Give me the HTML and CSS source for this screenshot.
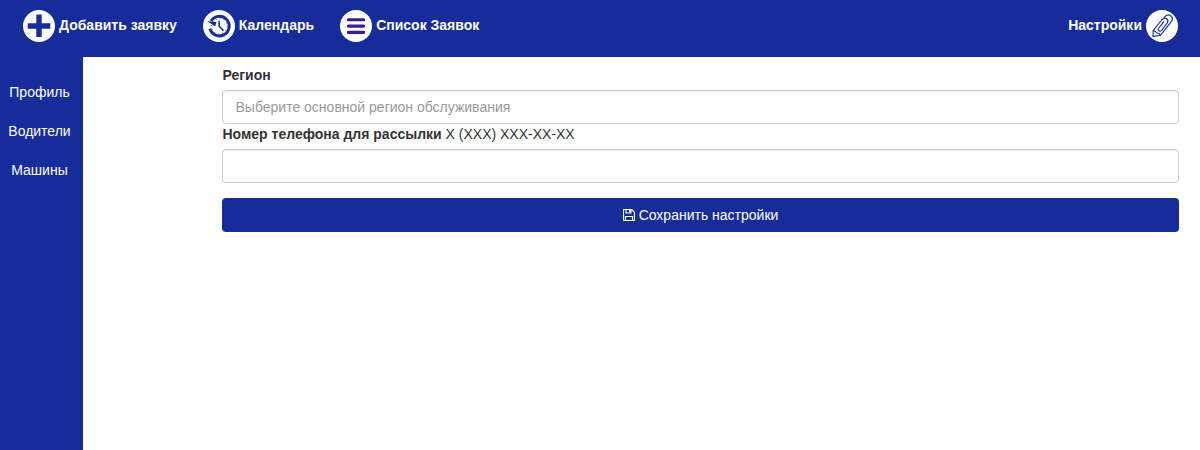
FILE: index.html
```html
<!DOCTYPE html>
<html lang="ru">
<head>
<meta charset="utf-8">
<title>Настройки</title>
<link rel="stylesheet" href="styles.css">
</head>
<body>
<header class="topbar">
  <nav class="menu">
    <a class="menu-item">
      <svg class="icon" viewBox="0 0 32 32"><circle cx="16" cy="16" r="16" fill="#fff"/><path d="M13.3 4.5h5.4v8.8h8.6v5.4h-8.6V27h-5.4v-8.3H4.7v-5.4h8.6z" fill="#152c9a"/></svg>
      <span>Добавить заявку</span>
    </a>
    <a class="menu-item">
      <svg class="icon" viewBox="0 0 32 32"><circle cx="16" cy="16" r="16" fill="#fff"/><path d="M8 11A9.8 9.8 0 1 1 6.9 18.6" fill="none" stroke="#152c9a" stroke-width="2.9"/><path d="M4.2 11.2L13.4 12l-1.2 4.6z" fill="#152c9a"/><circle cx="16.3" cy="16.2" r="7.9" fill="none" stroke="#152c9a" stroke-width="1.4" stroke-dasharray="1 3.14" opacity=".6"/><path d="M16.2 10.8v5.6l4.4 4.4" fill="none" stroke="#152c9a" stroke-width="1.5"/></svg>
      <span>Календарь</span>
    </a>
    <a class="menu-item">
      <svg class="icon" viewBox="0 0 32 32"><circle cx="16" cy="16" r="16" fill="#fff"/><path d="M8.3 9.8h15.4M8.3 16.1h15.4M8.3 22.4h15.4" stroke="#3c1d91" stroke-width="3.1" stroke-linecap="round"/></svg>
      <span>Список Заявок</span>
    </a>
  </nav>
  <a class="menu-item">
    <span>Настройки</span>
    <svg class="icon" viewBox="0 0 32 32"><circle cx="16" cy="16" r="16" fill="#fff"/><g fill="none" stroke="#203799" stroke-width="1.2" stroke-linecap="round" stroke-linejoin="round"><path d="M17.6 8.6 18.8 6.9Q21.5 3.6 24.6 5.5Q27.8 8 25.5 11.4L14.6 25.2L7 26.6 7.2 20.6 15.6 10Q18.2 7 20.8 8.8Q22.9 10.8 21.2 13.2L15.6 20.4Q14.2 21.8 12.9 20.8Q11.6 19.6 12.8 18L17.6 11.8"/><path d="M7.4 20.8Q10 21 10.8 23Q13.4 22.8 14.4 25"/></g></svg>
  </a>
</header>
<div class="page">
  <aside class="sidebar">
    <a>Профиль</a>
    <a>Водители</a>
    <a>Машины</a>
  </aside>
  <form class="settings">
    <label class="label" for="region">Регион</label>
    <input class="field" id="region" type="text" placeholder="Выберите основной регион обслуживания">
    <div class="label"><label for="phone">Номер телефона для рассылки</label> <span class="hint">X (XXX) XXX-XX-XX</span></div>
    <input class="field" id="phone" type="text">
    <button class="save" type="button"><svg class="floppy" viewBox="0 0 12 12"><path d="M.5 .5H8.6L11.5 3.4V11.5H.5zM3 .5V4h5V.5M2.5 11.5V7.5h7v4" fill="none" stroke="#fff" stroke-width="1.15"/><path d="M6 .5h1.6v2.7H6z" fill="#fff"/></svg><span>Сохранить настройки</span></button>
  </form>
</div>
</body>
</html>
```
FILE: styles.css
```css
* {
  box-sizing: border-box;
}

body {
  margin: 0;
  height: 450px;
  display: flex;
  flex-direction: column;
  background: #fff;
  color: #333;
  font: 14px/20px "Liberation Sans", Arial, sans-serif;
}

.topbar {
  height: 57px;
  padding: 10px 22px 0 23px;
  display: flex;
  justify-content: space-between;
  align-items: flex-start;
  background: #152c9a;
}

.menu {
  display: flex;
  gap: 26px;
}

.menu-item {
  height: 32px;
  display: flex;
  align-items: center;
  gap: 4px;
  color: #fff;
  font-weight: bold;
}

.menu-item span {
  padding-bottom: 2px;
}

.icon {
  width: 32px;
  height: 32px;
}

.page {
  flex: 1;
  display: flex;
}

.sidebar {
  width: 83px;
  padding: 25px 4px 0 0;
  display: flex;
  flex-direction: column;
  gap: 19px;
  background: #152c9a;
  color: #fff;
  text-align: center;
}

.settings {
  flex: 1;
  display: flex;
  flex-direction: column;
  padding: 8px 21px 0 139px;
}

.label {
  margin-bottom: 5px;
  padding-left: 0.5px;
  font-weight: bold;
}

.hint {
  font-weight: normal;
}

.field {
  height: 34px;
  padding: 6px 12px 6px 12.5px;
  border: 1px solid #ccc;
  border-radius: 4px;
  box-shadow: inset 0 1px 1px rgba(0, 0, 0, .075);
  font: inherit;
}

.field::placeholder {
  color: #999;
  opacity: 1;
}

.save {
  height: 34px;
  margin-top: 15px;
  display: flex;
  justify-content: center;
  align-items: center;
  gap: 4px;
  border: 0;
  border-radius: 4px;
  background: #152c9a;
  color: #fff;
  font: inherit;
}

.floppy {
  width: 12px;
  height: 12px;
}
```
